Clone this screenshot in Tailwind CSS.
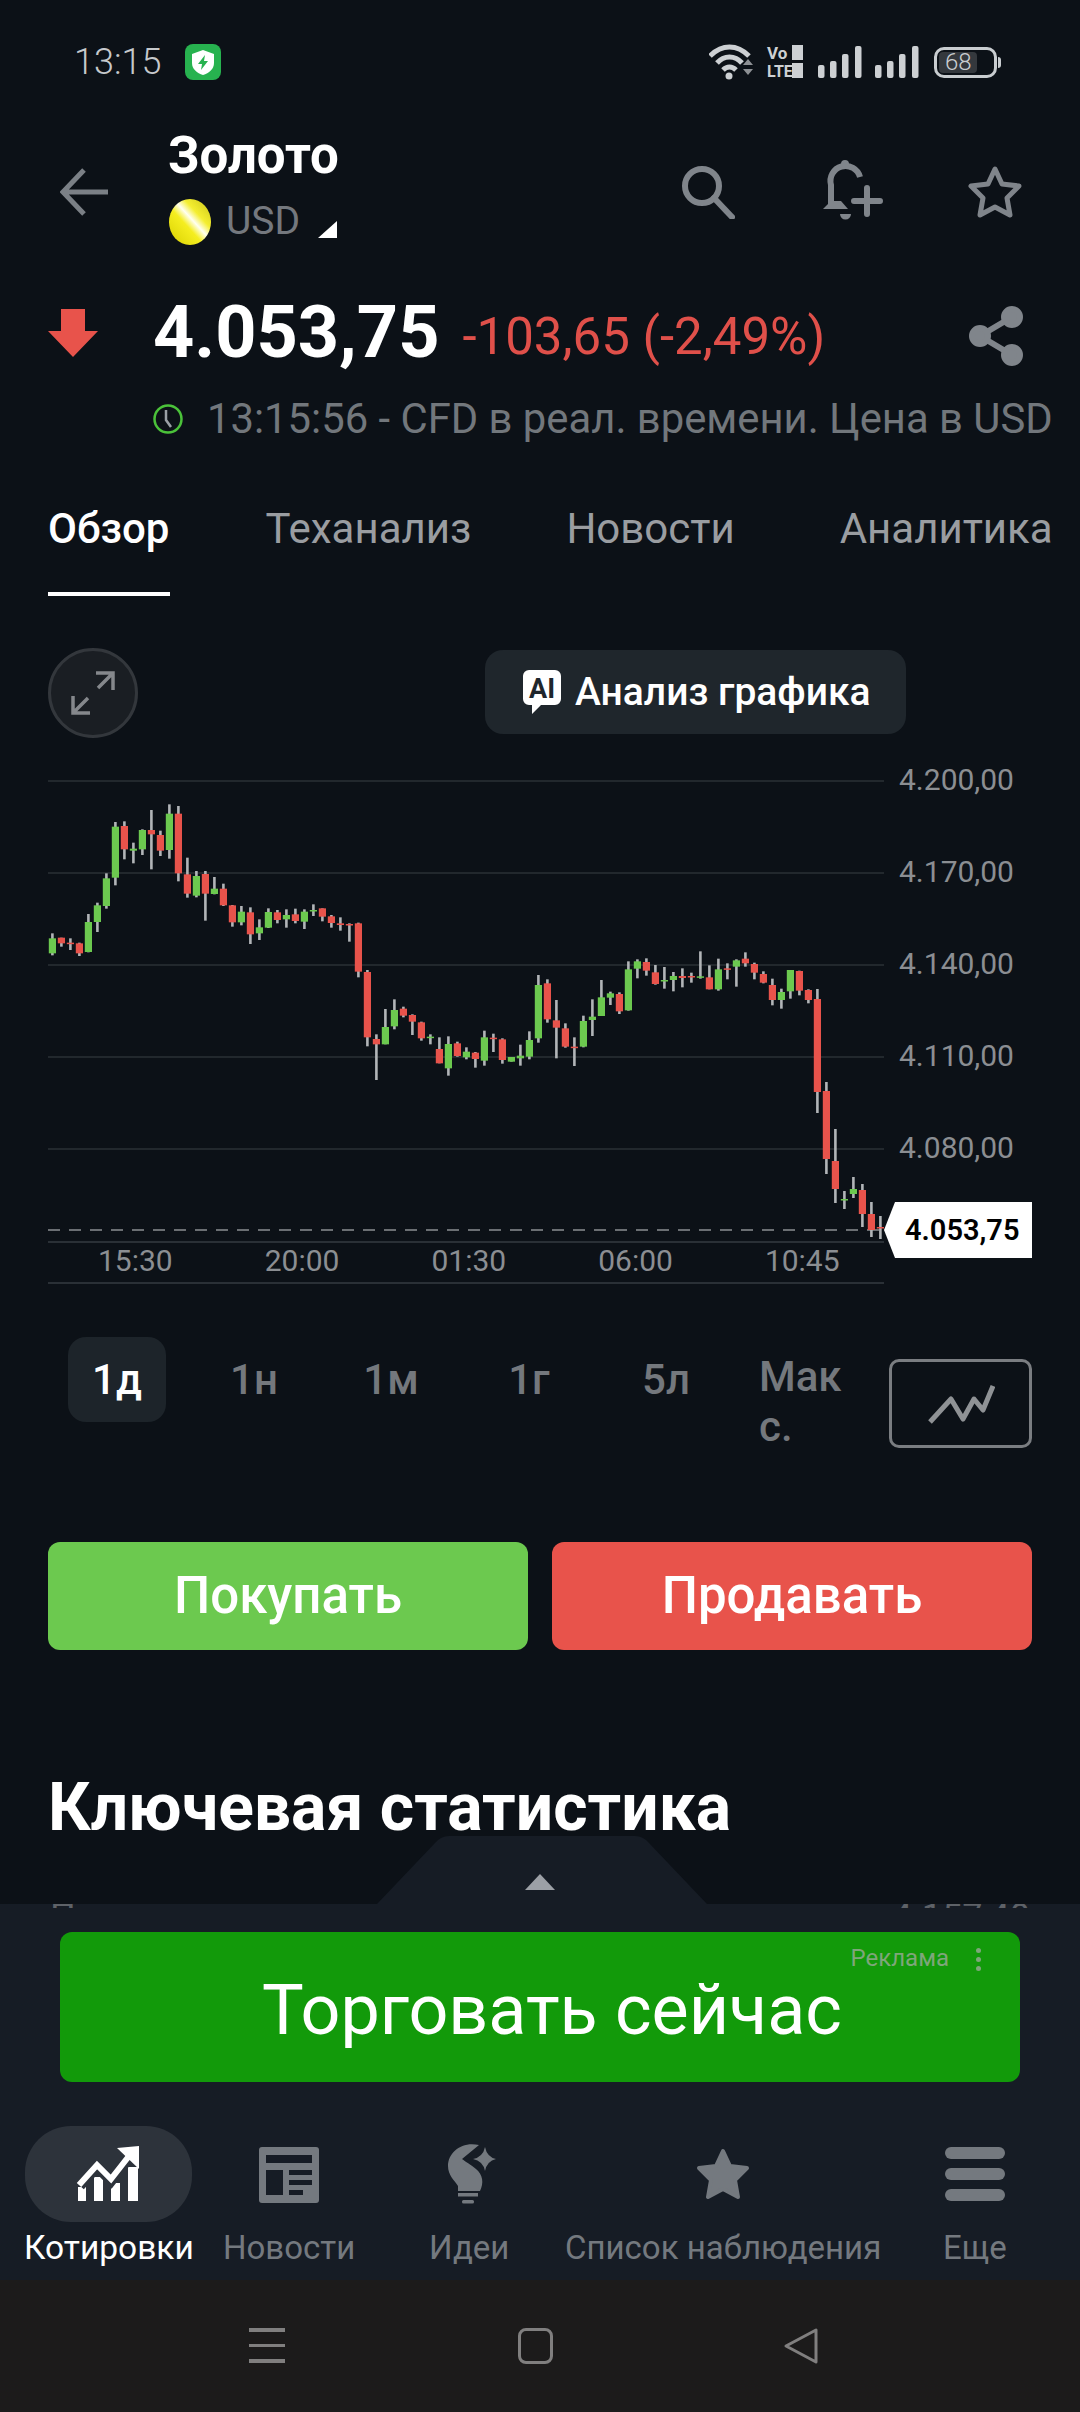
<!DOCTYPE html>
<html lang="ru">
<head>
  <meta charset="UTF-8" />
  <title>Золото</title>
  <script src="https://cdn.jsdelivr.net/npm/@tailwindcss/browser@4"></script>
</head>
<body class="bg-[#0c1117]">
<div class="relative w-[1080px] h-[2412px] overflow-hidden flex flex-col bg-[#0c1117] text-white font-['Roboto',sans-serif]">

  <!-- Status bar -->
  <div class="h-[120px] shrink-0 flex items-center pl-[74px] pt-[4px]">
    <span class="text-[36px] leading-none text-[#c6c9cc] font-light">13:15</span>
    <svg class="ml-[24px]" width="36" height="36" viewBox="0 0 36 36">
      <rect width="36" height="36" rx="8" fill="#27b24f"/>
      <path d="M18 6 L29 10 V19 C29 25 24 29 18 31 C12 29 7 25 7 19 V10 Z" fill="#fff"/>
      <path d="M20 11 L13 20 H17 L16 26 L23 17 H19 Z" fill="#27b24f"/>
    </svg>
    <svg class="ml-auto mr-[90px]" width="281" height="36" viewBox="0 0 281 36">
      <g fill="none" stroke="#cdd0d3" stroke-width="5">
        <path d="M1 12 C13 0 28 0 40 12"/>
        <path d="M8 19 C15 11 26 11 33 19"/>
        <path d="M14 26 C18 22 23 22 27 26"/>
      </g>
      <circle cx="20" cy="32" r="3.5" fill="#cdd0d3"/>
      <path d="M34 21 L39 15 L44 21 Z M34 25 H44 L39 31 Z" fill="#8d9094"/>
      <text x="58" y="15" fill="#cdd0d3" class="text-[17px] font-bold">Vo</text>
      <text x="58" y="33" fill="#cdd0d3" class="text-[16px] font-bold">LTE</text>
      <rect x="83" y="1" width="11" height="15" fill="#cdd0d3"/>
      <rect x="83" y="19" width="11" height="15" fill="#cdd0d3"/>
      <g fill="#cdd0d3">
        <rect x="109" y="21" width="6.5" height="13" rx="2"/>
        <rect x="121" y="17" width="6.5" height="17" rx="2"/>
        <rect x="133" y="10" width="6.5" height="24" rx="2"/>
        <rect x="146" y="2" width="6.5" height="32" rx="2"/>
        <rect x="166" y="21" width="6.5" height="13" rx="2"/>
        <rect x="178" y="17" width="6.5" height="17" rx="2"/>
        <rect x="190" y="10" width="6.5" height="24" rx="2"/>
        <rect x="203" y="2" width="6.5" height="32" rx="2"/>
      </g>
    </svg>
    <div class="absolute left-[934px] top-[47px] w-[63px] h-[31px] border-[3px] border-[#c9cdd0] rounded-[10px] p-[2px]">
      <div class="w-[38px] h-full bg-[#34383d] rounded-[4px] text-[24px] leading-[21px] text-[#c9cdd0] font-light pl-[6px]">68</div>
    </div>
    <div class="absolute left-[998px] top-[57px] w-[3px] h-[11px] bg-[#c9cdd0] rounded-r-sm"></div>
  </div>

  <!-- Header -->
  <div class="h-[144px] shrink-0 flex items-center">
    <svg class="ml-[60px]" width="48" height="48" viewBox="0 0 48 48" fill="none" stroke="#7b8086" stroke-width="5">
      <path d="M48 24 H3 M24 2 L3 24 L24 46"/>
    </svg>
    <div class="ml-[60px] w-[178px] flex flex-col -mt-[10px]">
      <span class="text-[51px] leading-[54px] font-bold">Золото</span>
      <div class="relative flex items-center mt-[15px] h-[48px]">
        <svg width="44" height="46" viewBox="0 0 44 46">
          <defs><linearGradient id="coin" x1="0" y1="1" x2="1" y2="0">
            <stop offset="0" stop-color="#d8d000"/><stop offset=".42" stop-color="#f5ee20"/><stop offset=".55" stop-color="#fffff0"/><stop offset=".68" stop-color="#f4ee30"/><stop offset="1" stop-color="#c8c218"/>
          </linearGradient></defs>
          <ellipse cx="22" cy="23" rx="21" ry="23" fill="url(#coin)"/>
        </svg>
        <span class="ml-[14px] text-[39px] leading-none text-[#74787e]">USD</span>
        <svg class="absolute left-[150px] top-[23px]" width="19" height="17" viewBox="0 0 19 17"><path d="M19 0 V17 H0 Z" fill="#fff"/></svg>
      </div>
    </div>
    <svg class="ml-[335px]" width="54" height="54" viewBox="0 0 54 54" fill="none" stroke="#80858b" stroke-width="6">
      <circle cx="21" cy="21" r="17"/><path d="M33 33 L51 52" stroke-linecap="round"/>
    </svg>
    <svg class="ml-[65px]" width="100" height="90" viewBox="0 0 100 90" fill="none" stroke="#80858b" stroke-width="6">
      <path d="M31 57 V38 A15 15 0 0 1 60 30"/>
      <circle cx="45" cy="17" r="4" fill="#80858b" stroke="none"/>
      <path d="M23 62 L31 54 H41 L48 62 Z" fill="#80858b" stroke="none"/>
      <path d="M40 67 H51 A5.5 5.5 0 0 1 40 67 Z" fill="#80858b" stroke="none"/>
      <path d="M67 41 V67 M54 54 H80" stroke-linecap="round"/>
    </svg>
    <svg class="ml-[67px]" width="56" height="54" viewBox="0 0 56 54" fill="none" stroke="#80858b" stroke-width="5" stroke-linejoin="round">
      <path d="M28 4 L35 19 L52 21 L40 33 L43 50 L28 42 L13 50 L16 33 L4 21 L21 19 Z"/>
    </svg>
  </div>

  <!-- Price -->
  <div class="h-[122px] shrink-0 flex items-center pt-[16px]">
    <svg class="ml-[48px]" width="50" height="48" viewBox="0 0 50 48"><path d="M13 0 H37 V22 H50 L25 48 L0 22 H13 Z" fill="#e8534b"/></svg>
    <span class="ml-[55px] text-[72px] leading-none font-bold">4.053,75</span>
    <span class="ml-[23px] text-[51px] leading-none text-[#e0504a] mt-[6px]">-103,65 (-2,49%)</span>
    <svg class="ml-auto mr-[56px] mt-[5px]" width="56" height="62" viewBox="0 0 56 62" fill="#80858b" stroke="#80858b" stroke-width="6">
      <path d="M44 12 L12 31 L44 50" fill="none"/>
      <circle cx="44" cy="12" r="8"/><circle cx="12" cy="31" r="8"/><circle cx="44" cy="50" r="8"/>
    </svg>
  </div>

  <div class="h-[66px] shrink-0 flex items-center pl-[153px]">
    <svg width="30" height="32" viewBox="0 0 30 32" fill="none" stroke="#4bc23a" stroke-width="2.5">
      <circle cx="15" cy="16" r="13.5"/><path d="M13 7 V17 L18 24" stroke="#9aa0a6"/>
    </svg>
    <span class="ml-[24px] text-[41.8px] leading-none text-[#72777c] whitespace-nowrap">13:15:56 - CFD в реал. времени. Цена в USD</span>
  </div>

  <!-- Tabs -->
  <div class="relative h-[144px] shrink-0 flex items-center pt-[10px] text-[42px] leading-none text-[#9a9da1]">
    <span class="ml-[48px] text-white font-medium">Обзор</span>
    <span class="ml-[96px]">Теханализ</span>
    <span class="ml-[95px]">Новости</span>
    <span class="ml-[105px]">Аналитика</span>
    <div class="absolute left-[48px] bottom-[0px] w-[122px] h-[4px] bg-white"></div>
  </div>

  <!-- Chart toolbar -->
  <div class="h-[174px] shrink-0 flex items-start pt-[52px]">
    <div class="ml-[48px] w-[90px] h-[90px] rounded-full border-[3px] border-[#33373c] bg-[#1a1e23] flex items-center justify-center">
      <svg width="44" height="44" viewBox="0 0 44 44" fill="none" stroke="#85888c" stroke-width="3.5">
        <path d="M25 2 H42 V19 M42 2 L27 17 M19 42 H2 V25 M2 42 L17 27"/>
      </svg>
    </div>
    <div class="ml-[347px] mt-[2px] w-[421px] h-[84px] rounded-[18px] bg-[#1f262c] flex items-center pl-[37px]">
      <svg width="40" height="44" viewBox="0 0 40 44">
        <path d="M7 0 H33 A6 6 0 0 1 39 6 V29 A6 6 0 0 1 33 35 H19 L10 44 V35 H7 A6 6 0 0 1 1 29 V6 A6 6 0 0 1 7 0 Z" fill="#fff"/>
        <text x="7" y="28" fill="#1f262c" class="text-[27px] font-bold">AI</text>
      </svg>
      <span class="ml-[13px] text-[39px] leading-none font-medium whitespace-nowrap">Анализ графика</span>
    </div>
  </div>

  <!-- Chart -->
  <div class="relative h-[519px] shrink-0">
    <svg id="chart" class="absolute left-0 top-0" width="1080" height="519" viewBox="0 770 1080 519" fill="none"></svg>
    <div class="absolute left-[899px] top-[-36px] flex flex-col text-[30px] leading-[92px] text-[#8b8e92]">
      <span>4.200,00</span><span>4.170,00</span><span>4.140,00</span><span>4.110,00</span><span>4.080,00</span>
    </div>
    <div class="absolute left-[48px] top-[473px] flex text-[30px] leading-[36px] text-[#8b8e92] pl-[50px] gap-[92px]">
      <span>15:30</span><span>20:00</span><span>01:30</span><span>06:00</span><span>10:45</span>
    </div>
    <svg class="absolute left-[884px] top-[432px]" width="148" height="56" viewBox="0 0 148 56"><path d="M0 28 L11 0 H148 V56 H11 Z" fill="#fff"/></svg>
    <span class="absolute left-[905px] top-[442px] text-[29px] leading-[36px] font-semibold text-black">4.053,75</span>
  </div>

  <!-- Ranges -->
  <div class="h-[181px] shrink-0 flex items-start pt-[48px] text-[42px] font-medium text-[#74787d]">
    <div class="ml-[68px] w-[98px] h-[85px] rounded-[18px] bg-[#1d242a] text-white flex items-center justify-center">1д</div>
    <div class="ml-[48px] w-[80px] h-[85px] flex items-center justify-center">1н</div>
    <div class="ml-[57px] w-[80px] h-[85px] flex items-center justify-center">1м</div>
    <div class="ml-[58px] w-[80px] h-[85px] flex items-center justify-center">1г</div>
    <div class="ml-[57px] w-[80px] h-[85px] flex items-center justify-center">5л</div>
    <div class="ml-[53px] w-[84px] h-[100px] mt-[15px] leading-[50px]">Мак<br>с.</div>
    <div class="ml-[46px] w-[143px] h-[89px] mt-[22px] border-[3px] border-[#7a7d81] rounded-[10px] flex items-center justify-center">
      <svg width="68" height="42" viewBox="0 0 68 42" fill="none" stroke="#8f9295" stroke-width="5" stroke-linejoin="round">
        <path d="M3 39 L24 16 L36 36 L47 16 L56 27 L66 3"/>
      </svg>
    </div>
  </div>

  <!-- Buy / sell -->
  <div class="shrink-0 flex gap-[24px] px-[48px] pt-[72px]">
    <div class="flex-1 h-[108px] rounded-[12px] bg-[#6cc94f] flex items-center justify-center text-[51px] font-medium">Покупать</div>
    <div class="flex-1 h-[108px] rounded-[12px] bg-[#e8534b] flex items-center justify-center text-[51px] font-medium">Продавать</div>
  </div>

  <h2 class="shrink-0 ml-[48px] mt-[120px] text-[66px] leading-[76px] font-bold whitespace-nowrap">Ключевая статистика</h2>

  <!-- Bottom panel -->
  <div class="absolute left-0 top-[1904px] w-full h-[376px] bg-[#161c25]">
    <svg class="absolute left-[377px] top-[-68px]" width="330" height="68" viewBox="0 0 330 68">
      <path d="M0 68 L58 7 Q64 0 72 0 H258 Q266 0 272 7 L330 68 Z" fill="#161c25"/>
      <path d="M163 38 L178 54 H148 Z" fill="#9ca0a6"/>
    </svg>
    <div class="flex justify-between h-[4px] overflow-hidden px-[50px] text-[36px] leading-none text-[#5e6268]">
      <span class="-mt-[5px]">Пред. закрытие</span><span class="-mt-[5px]">4.157,40</span>
    </div>

    <div class="relative mx-[60px] mt-[24px] h-[150px] rounded-[12px] bg-[#129a0a] flex items-center justify-center">
      <span class="text-[70px] leading-none blur-[0.7px] mt-[5px] ml-[24px]">Торговать сейчас</span>
      <span class="absolute right-[71px] top-[13px] text-[24px] leading-[26px] text-[#7ea67a]">Реклама</span>
      <div class="absolute right-[39px] top-[16px] flex flex-col gap-[4px]">
        <span class="w-[5px] h-[5px] rounded-full bg-[#7ea67a]"></span>
        <span class="w-[5px] h-[5px] rounded-full bg-[#7ea67a]"></span>
        <span class="w-[5px] h-[5px] rounded-full bg-[#7ea67a]"></span>
      </div>
    </div>

    <!-- Tab bar -->
    <div class="absolute left-0 top-[222px] w-full text-[33px] leading-[40px] text-[#74797f]">
      <div class="absolute left-[25px] top-0 w-[167px] h-[96px] rounded-[46px] bg-[#2d333b] flex items-center justify-center">
        <svg width="100" height="90" viewBox="0 0 100 90">
          <g fill="#fff">
            <rect x="19" y="58" width="8" height="14"/><rect x="35" y="48" width="9" height="24"/>
            <rect x="52" y="54" width="9" height="18"/><rect x="69" y="38" width="10" height="34"/>
          </g>
          <path d="M20 56 L38 36 L52 50 L70 27" fill="none" stroke="#2d333b" stroke-width="13"/>
          <path d="M20 56 L38 36 L52 50 L70 27" fill="none" stroke="#fff" stroke-width="6"/>
          <path d="M58 19 L80 17 L80 40 Z" fill="#fff"/>
        </svg>
      </div>
      <span class="absolute left-[24px] top-[102px] text-white text-[33.5px]">Котировки</span>

      <svg class="absolute left-[259px] top-[21px]" width="60" height="56" viewBox="0 0 60 56">
        <rect width="60" height="56" rx="3" fill="#74797f"/>
        <g fill="#161c25">
          <rect x="7" y="8" width="46" height="8"/><rect x="7" y="23" width="17" height="25"/>
          <rect x="30" y="23" width="23" height="5"/><rect x="30" y="33" width="23" height="5"/><rect x="30" y="43" width="14" height="5"/>
        </g>
      </svg>
      <span class="absolute left-[223px] top-[102px]">Новости</span>

      <svg class="absolute left-[420px] top-[4px]" width="100" height="90" viewBox="0 0 100 90" fill="#74797f">
        <path d="M59 15 C42 11 28 22 28 36 C28 45 34 50 38 56 V61 H60 C64 53 63 45 56 39 C50 34 46 32 42 29 Z"/>
        <path d="M65 17 Q67 27 76 29 Q67 31 65 41 Q63 31 53 29 Q63 27 65 17 Z"/>
        <rect x="38" y="63" width="20" height="3.5"/><rect x="42" y="70" width="12" height="3.5" rx="1.5"/>
      </svg>
      <span class="absolute left-[429px] top-[102px]">Идеи</span>

      <svg class="absolute left-[695px] top-[21px]" width="56" height="54" viewBox="0 0 56 54" fill="#74797f" stroke="#74797f" stroke-width="4" stroke-linejoin="round">
        <path d="M28 4 L35 19 L52 21 L40 33 L43 50 L28 42 L13 50 L16 33 L4 21 L21 19 Z"/>
      </svg>
      <span class="absolute left-[565px] top-[102px] whitespace-nowrap">Список наблюдения</span>

      <div class="absolute left-[945px] top-[21px] w-[60px] flex flex-col gap-[9px]">
        <div class="h-[12px] rounded-[6px] bg-[#74797f]"></div>
        <div class="h-[12px] rounded-[6px] bg-[#74797f]"></div>
        <div class="h-[12px] rounded-[6px] bg-[#74797f]"></div>
      </div>
      <span class="absolute left-[943px] top-[102px]">Еще</span>
    </div>
  </div>

  <!-- System nav -->
  <div class="absolute left-0 top-[2280px] w-full h-[132px] bg-[#1c1b1b]">
    <div class="absolute left-[249px] top-[48px] w-[36px] flex flex-col gap-[12px]">
      <div class="h-[3.5px] bg-[#807f7f]"></div><div class="h-[3.5px] bg-[#807f7f]"></div><div class="h-[3.5px] bg-[#807f7f]"></div>
    </div>
    <div class="absolute left-[518px] top-[48px] w-[35px] h-[36px] border-[3px] border-[#807f7f] rounded-[8px]"></div>
    <svg class="absolute left-[783px] top-[47px]" width="36" height="38" viewBox="0 0 36 38" fill="none" stroke="#807f7f" stroke-width="3" stroke-linejoin="round">
      <path d="M33 3 V35 L3 19 Z"/>
    </svg>
  </div>
</div>

<script>
  // candles read off the chart: [wickTop, wickBottom, bodyTop, bodyBottom, up]
  const zoomed = [
    [940,1006,955,1000,1],[953,980,953,970,0],[955,990,968,971,0],[968,1008,970,1000,0],[882,997,906,996,1],
    [848,936,856,906,1],[760,866,775,858,1],[606,796,620,773,1],[604,718,618,688,0],[668,730,686,692,1],
    [628,705,630,688,1],[570,748,630,643,0],[632,708,645,692,0],[553,716,581,690,1],[558,784,581,760,0],
    [713,833,763,821,0],[753,832,768,827,1],[753,902,762,821,0],[771,823,806,822,1],[791,858,806,856,0],
    [855,920,856,907,0],[858,916,875,907,1],[862,972,877,943,0],[898,960,922,940,1],[865,924,876,923,1],
    [870,910,877,900,0],[868,923,885,898,1],[866,910,883,903,0],[868,927,875,905,1],[853,888,870,873,1],
    [865,904,865,890,0],[885,923,889,909,0],[892,932,910,915,0],[910,965,912,914,0],[908,1072,910,1055,0],
    [1050,1279,1056,1252,0],[1243,1380,1257,1273,0],[1167,1273,1221,1273,1],[1138,1228,1170,1219,1],[1160,1192,1166,1187,0],
    [1183,1245,1185,1205,0],[1205,1262,1207,1255,0],[1243,1273,1250,1253,1],[1252,1330,1287,1330,0],[1249,1367,1272,1345,1],
    [1265,1310,1270,1308,0],[1282,1318,1295,1312,1],[1296,1343,1298,1317,0],[1232,1337,1252,1322,1],[1241,1296,1253,1257,0],
    [1255,1331,1258,1320,0],[1311,1325,1311,1325,1],[1274,1337,1307,1315,1],[1234,1318,1260,1310,1],[1065,1268,1095,1255,1],
    [1078,1208,1090,1198,0],[1140,1315,1201,1223,0],[1210,1283,1225,1280,0],[1252,1338,1280,1282,0],[1187,1282,1203,1280,1],
    [1138,1248,1190,1200,1],[1080,1188,1132,1188,1],[1115,1155,1120,1133,1],[1117,1182,1122,1174,0],[1024,1172,1048,1171,1],
    [1018,1075,1024,1046,1],[1015,1067,1026,1052,0],[1035,1094,1057,1092,0],[1041,1106,1080,1084,1],[1056,1114,1068,1080,1],
    [1045,1102,1068,1074,0],[1058,1088,1068,1072,0],[994,1076,1069,1073,1],[1036,1108,1072,1108,0],[1016,1112,1048,1108,1],
    [1030,1078,1045,1049,0],[1018,1100,1021,1040,1],[997,1040,1016,1030,0],[1028,1078,1032,1058,0],[1054,1090,1062,1088,0],
    [1076,1156,1095,1140,0],[1106,1166,1116,1140,1],[1050,1136,1050,1114,1],[1052,1126,1053,1112,0],[1108,1150,1110,1140,0]
  ].map(c => [620 + c[0]/3, 620 + c[1]/3, 620 + c[2]/3, 620 + c[3]/3, c[4]]);

  const candles = zoomed.concat([
    [989,1113,999,1092,0],[1082,1174,1091,1159,0],[1129,1203,1161,1189,0],[1191,1209,1199,1200,1],
    [1177,1198,1189,1194,1],[1184,1227,1190,1214,0],[1202,1237,1214,1230,0],[1216,1239,1227,1228,0]
  ]);

  const chart = document.getElementById('chart');
  const add = (name, attrs) => {
    const el = document.createElementNS('http://www.w3.org/2000/svg', name);
    Object.keys(attrs).forEach(k => el.setAttribute(k, attrs[k]));
    chart.appendChild(el);
  };

  [781, 873, 965, 1057, 1149].forEach(y => add('line', { x1: 48, x2: 884, y1: y, y2: y, stroke: '#2a3036', 'stroke-width': 1.5 }));
  [1242, 1283].forEach(y => add('line', { x1: 48, x2: 884, y1: y, y2: y, stroke: '#2a3036', 'stroke-width': 2 }));
  add('line', { x1: 48, x2: 884, y1: 1230, y2: 1230, stroke: '#8b8e92', 'stroke-width': 1.5, 'stroke-dasharray': '12 9' });

  candles.forEach((c, i) => {
    const x = 52.4 + 9 * i;
    add('rect', { x: x - 1.3, y: c[0], width: 2.6, height: c[1] - c[0], fill: '#b2b5b8' });
    add('rect', { x: x - 3.6, y: c[2], width: 7.2, height: Math.max(c[3] - c[2], 1.5), fill: c[4] ? '#6cc94f' : '#e8534b' });
  });
</script>
</body>
</html>
